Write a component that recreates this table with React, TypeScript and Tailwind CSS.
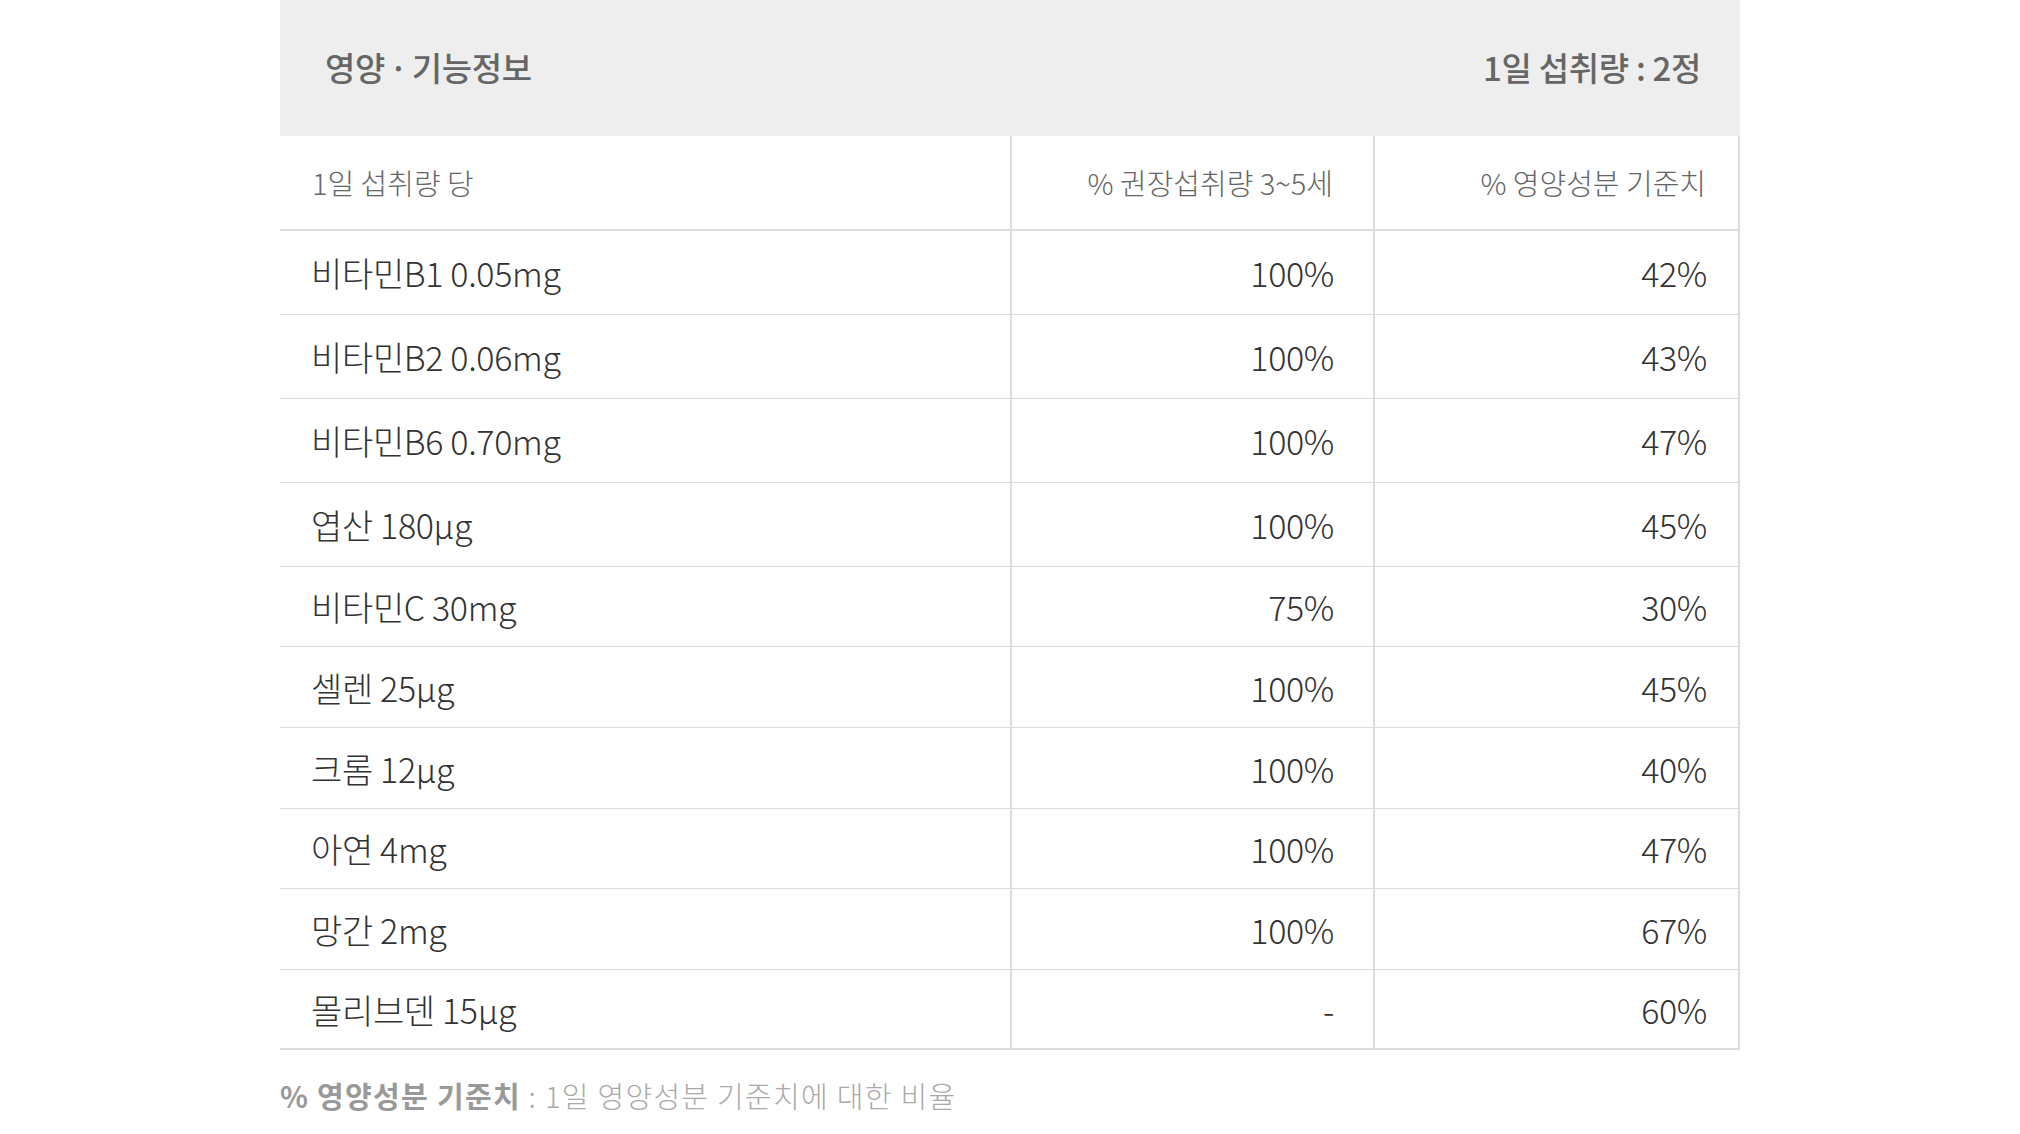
const FONT = "font-['Noto_Sans_CJK_KR','Noto_Sans',sans-serif]";

type Row = {
    name: string;
    rec: string;
    std: string;
    h: string;
    last?: boolean;
};

const rows: Row[] = [
    { name: "비타민B1 0.05mg", rec: "100%", std: "42%", h: "h-[84px]" },
    { name: "비타민B2 0.06mg", rec: "100%", std: "43%", h: "h-[84px]" },
    { name: "비타민B6 0.70mg", rec: "100%", std: "47%", h: "h-[84px]" },
    { name: "엽산 180μg", rec: "100%", std: "45%", h: "h-[84px]" },
    { name: "비타민C 30mg", rec: "75%", std: "30%", h: "h-[80px]" },
    { name: "셀렌 25μg", rec: "100%", std: "45%", h: "h-[81px]" },
    { name: "크롬 12μg", rec: "100%", std: "40%", h: "h-[81px]" },
    { name: "아연 4mg", rec: "100%", std: "47%", h: "h-[80px]" },
    { name: "망간 2mg", rec: "100%", std: "67%", h: "h-[81px]" },
    { name: "몰리브덴 15μg", rec: "-", std: "60%", h: "h-[80px]", last: true },
];

export default function App() {
    return (
        <div className={`h-[1134px] w-[2020px] bg-white ${FONT}`}>
            <div className="ml-[280px] w-[1460px]">

                {/* title bar */}

                <div className="flex h-[136px] items-center justify-between bg-[#eeeeee] pl-[45px] pr-[39px] text-[33px] font-medium tracking-[-0.01em] text-[#666666]">
                    <span>영양<span className="mx-[4px]">·</span>기능정보</span>
                    <span>1일 섭취량 : 2정</span>
                </div>

                {/* table */}

                <div className="border-r-2 border-[#dcdcdc]">

                    <div className="grid h-[95px] grid-cols-[730px_363px_1fr] border-b-2 border-[#dcdcdc] text-[29px] font-light text-[#666666]">
                        <div className="flex items-center pl-[32px]">1일 섭취량 당</div>
                        <div className="flex items-center justify-end border-l-2 border-[#dcdcdc] pr-[40px]">% 권장섭취량 3~5세</div>
                        <div className="flex items-center justify-end border-l-2 border-[#dcdcdc] pr-[32px]">% 영양성분 기준치</div>
                    </div>

                    {rows.map((r) => (
                        <div
                            key={r.name}
                            className={`grid grid-cols-[730px_363px_1fr] text-[34px] font-light tracking-[-0.01em] text-[#333333] ${r.h} ${r.last ? "border-b-2" : "border-b"} border-[#dcdcdc]`}
                        >
                            <div className="flex items-center pl-[31px]">{r.name}</div>
                            <div className="flex items-center justify-end border-l-2 border-[#dcdcdc] pr-[39px]">{r.rec}</div>
                            <div className="flex items-center justify-end border-l-2 border-[#dcdcdc] pr-[31px]">{r.std}</div>
                        </div>
                    ))}

                </div>

                {/* footnote */}

                <p className="mt-[24px] text-[29px] font-light tracking-[0.045em] text-[#aaaaaa]">
                    <span className="font-bold text-[#999999]">% 영양성분 기준치</span> : 1일 영양성분 기준치에 대한 비율
                </p>

            </div>
        </div>
    );
}
